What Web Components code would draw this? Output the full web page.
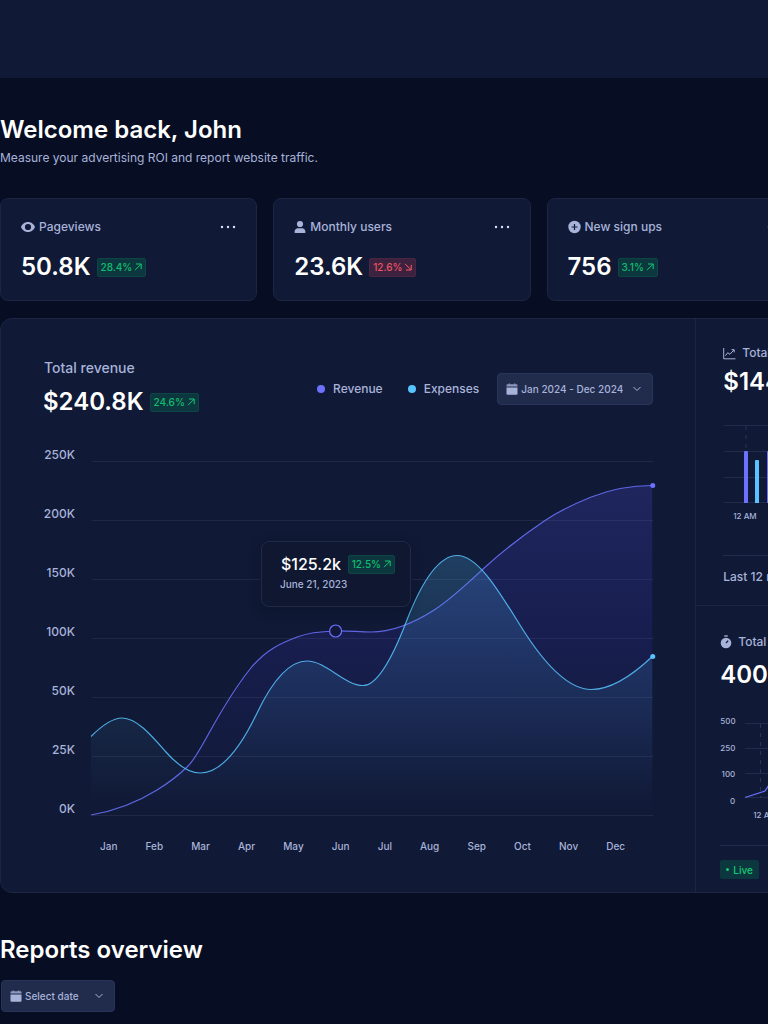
<!DOCTYPE html>
<html lang="en">
<head>
<meta charset="utf-8">
<meta name="viewport" content="width=device-width, initial-scale=1">
<title>Dashboard</title>
<style>
  html { background: #070d22; }
  body {
    margin: 0;
    overflow-x: hidden;
    font-family: Inter, "Noto Sans", sans-serif;
    font-size: 12px;
    line-height: 16px;
    color: #a8b3da;
    --panel: #101935;
    --line: #1c2541;
    --purple: #6c72ff;
    --cyan: #57c3ff;
  }
</style>
</head>
<body>
<dash-page></dash-page>

<script>
const icons = {
  eye: '<svg width="14" height="14" viewBox="0 0 14 14"><path fill="currentColor" fill-rule="evenodd" d="M7 2C3.600 2 1 4.300 0 7c1 2.700 3.600 5 7 5s6-2.300 7-5C13 4.300 10.400 2 7 2Zm0 1.900a3.100 3.100 0 1 1 0 6.200a3.100 3.100 0 0 1 0-6.200Z"/></svg>',
  user: '<svg width="12" height="14" viewBox="0 0 12 14"><circle cx="6" cy="4" r="3.100" fill="currentColor"/><path fill="currentColor" d="M.5 12.200C.5 9.500 2.200 8.200 4 8.200h4c1.800 0 3.500 1.300 3.500 4c0 .5-.3.800-.8.800H1.300c-.5 0-.8-.3-.8-.800Z"/></svg>',
  plus: '<svg width="13" height="14" viewBox="0 0 13 14"><circle cx="6.500" cy="7" r="6.200" fill="currentColor"/><path d="M6.500 4v6M3.500 7h6" stroke="#101935" stroke-width="1.200"/></svg>',
  chart: '<svg width="13" height="13" viewBox="0 0 13 13" fill="none" stroke="currentColor"><path d="M.7 1v10.800H12.500M2.500 8.700l2.200-3 2.200 1.600 4-4.300M8.500 2.700h2.700v2.700"/></svg>',
  watch: '<svg width="12" height="14" viewBox="0 0 12 14"><circle cx="6" cy="8" r="5.300" fill="currentColor"/><path d="M4.200 1h3.600" stroke="currentColor" stroke-width="1.300"/><path d="M6 8l2.200-2.300" stroke="#101935" stroke-width="1.200"/></svg>',
  calendar: '<svg width="12" height="12" viewBox="0 0 12 12"><path fill="currentColor" d="M.5 4.500h11v6.300a1 1 0 0 1-1 1h-9a1 1 0 0 1-1-1Z"/><path fill="currentColor" d="M1.500 1.200h1.300V.2h.9v1h4.600v-1h.9v1h1.300a1 1 0 0 1 1 1v1.400H.5V2.200a1 1 0 0 1 1-1Z" opacity=".8"/></svg>',
  dots: '<svg width="16" height="4" viewBox="0 0 16 4" fill="#d9e1fa"><circle cx="2" cy="2" r="1.200"/><circle cx="8" cy="2" r="1.200"/><circle cx="14" cy="2" r="1.200"/></svg>',
  chevron: '<svg width="10" height="6" viewBox="0 0 10 6" fill="none" stroke="currentColor"><path d="M1.500 1L5 4.500L8.500 1"/></svg>',
  up: '<svg width="8" height="8" viewBox="0 0 8 8" fill="none" stroke="currentColor"><path d="M1 7.200L7 1.200M2 1h5.200v5.200"/></svg>',
  down: '<svg width="8" height="8" viewBox="0 0 8 8" fill="none" stroke="currentColor"><path d="M1 .8L7 6.800M2 7h5.200V1.800"/></svg>'
};

function define(name, markup, setup) {
  const template = document.createElement('template');
  template.innerHTML = markup;
  customElements.define(name, class extends HTMLElement {
    connectedCallback() {
      if (this.shadowRoot) return;
      this.attachShadow({ mode: 'open' }).append(template.content.cloneNode(true));
      if (setup) setup(this, this.shadowRoot);
    }
  });
}

/* Smooth line through [x, y, slope] knots ordered by x. */
function curve(knots) {
  let d = `M${knots[0][0]} ${knots[0][1]}`;
  for (let i = 1; i < knots.length; i++) {
    const [x0, y0, m0] = knots[i - 1], [x1, y1, m1] = knots[i], h = (x1 - x0) / 3;
    d += 'C' + [x0 + h, y0 + m0 * h, x1 - h, y1 - m1 * h, x1, y1].join(' ');
  }
  return d;
}

define('dash-icon', '<style>:host{display:block;flex:none}svg{display:block}</style>', (host, root) => {
  root.append(document.createRange().createContextualFragment(icons[host.getAttribute('name')]));
});

define('trend-badge', `
  <style>
    :host { display: flex; align-items: center; gap: 2px; height: 19px; padding: 0 3px; box-sizing: border-box;
      border-radius: 2px; font-size: 10px; font-weight: 500; line-height: 12px;
      color: #14ca74; background: #0c373f; border: 1px solid #0d4444; }
    :host([down]) { color: #ff5a65; background: #3d2240; border-color: #4a2643; }
    span { opacity: .9; }
  </style>
  <span><slot></slot></span>`, (host, root) => {
  const icon = document.createElement('dash-icon');
  icon.setAttribute('name', host.hasAttribute('down') ? 'down' : 'up');
  root.append(icon);
});

define('stat-card', `
  <style>
    :host { display: block; box-sizing: border-box; height: 103px; padding: 18px 20px;
      border: 1px solid var(--line); border-radius: 8px; background: var(--panel); }
    header, .value { display: flex; align-items: center; }
    header { height: 20px; gap: 4px; }
    h2 { margin: 0; flex: 1; font-size: 12px; font-weight: 500; line-height: 20px; }
    button { border: 0; padding: 8px 0; background: none; display: flex; }
    .value { gap: 6px; margin-top: 14px; }
    strong { font-size: 24px; line-height: 32px; font-weight: 600; color: #fff; }
  </style>
  <header><slot name="icon"></slot><h2><slot name="label"></slot></h2>
    <button type="button" aria-label="More options"><dash-icon name="dots"></dash-icon></button></header>
  <div class="value"><strong><slot></slot></strong><slot name="trend"></slot></div>`);

define('date-select', `
  <style>
    :host { display: grid; grid-template-columns: auto; align-items: center; width: max-content; }
    select, dash-icon { grid-area: 1 / 1; }
    dash-icon { pointer-events: none; }
    .cal { margin-left: 9px; justify-self: start; }
    .chev { margin-right: 11px; justify-self: end; }
    select { appearance: none; box-sizing: border-box; min-width: 114px; height: 32px; padding: 0 29px 0 23px; margin: 0;
      border: 1px solid #29345a; border-radius: 4px; background: #212c4d; color: inherit;
      font-family: inherit; font-size: 10px; font-weight: 500; line-height: 14px; }
  </style>
  <select></select><dash-icon class="cal" name="calendar"></dash-icon><dash-icon class="chev" name="chevron"></dash-icon>`,
(host, root) => {
  const select = root.querySelector('select');
  select.setAttribute('aria-label', 'Date range');
  select.add(new Option(host.getAttribute('value')));
});

define('revenue-chart', `
  <style>
    :host { display: grid; grid-template-columns: 32px 1fr; column-gap: 16px; }
    .y { display: flex; flex-direction: column; justify-content: space-between; height: 370px; margin-top: -14px;
      text-align: right; font-size: 12px; line-height: 16px; font-weight: 500; }
    .plot { position: relative; height: 355px; }
    .plot > svg { display: block; width: 100%; height: 100%; overflow: visible; }
    .months { grid-column: 2; display: flex; justify-content: space-between; padding: 22px 28px 0 9px;
      font-size: 10px; line-height: 14px; font-weight: 500; }
    .tip { position: absolute; left: 170px; top: 80px; box-sizing: border-box; width: 150px; height: 66px; padding: 12px 15px 0 18px;
      border: 1px solid #202945; border-radius: 8px; background: #0f1731; box-shadow: 0 4px 12px #080f2566; }
    .tip div { display: flex; align-items: center; justify-content: space-between; }
    .tip strong { padding-left: 1px; font-size: 16px; line-height: 20px; font-weight: 500; color: #fff; }
    .tip time { display: block; margin-top: 2px; font-size: 10px; line-height: 16px; font-weight: 500; }
  </style>
  <div class="y"><span>250K</span><span>200K</span><span>150K</span><span>100K</span><span>50K</span><span>25K</span><span>0K</span></div>
  <div class="plot">
    <svg viewBox="0 0 562 355" preserveAspectRatio="none">
      <defs>
        <linearGradient id="rev" gradientUnits="userSpaceOnUse" x1="0" y1="24" x2="0" y2="355">
          <stop offset="0" stop-color="#575bff" stop-opacity=".2"/><stop offset=".5" stop-color="#4a40ff" stop-opacity=".12"/><stop offset="1" stop-color="#4a40ff" stop-opacity="0"/>
        </linearGradient>
        <linearGradient id="exp" gradientUnits="userSpaceOnUse" x1="0" y1="94" x2="0" y2="350">
          <stop offset="0" stop-color="#57c3ff" stop-opacity=".22"/><stop offset="1" stop-color="#57c3ff" stop-opacity="0"/>
        </linearGradient>
      </defs>
      <path d="M1 .5H562M1 59.500H562M1 118.500H562M1 177.500H562M1 236.500H562M1 295.500H562M1 354.500H562" stroke="#1f2845"/>
      <g class="series"></g>
      <circle cx="244.500" cy="170" r="6" fill="#11183a" stroke="#6c72ff" stroke-width="1.200"/>
      <circle cx="561.500" cy="24.500" r="2.500" fill="#6c72ff"/>
      <circle cx="561.500" cy="195.500" r="2.500" fill="#57c3ff"/>
    </svg>
    <div class="tip"><div><strong>$125.2k</strong><trend-badge>12.5%</trend-badge></div><time datetime="2023-06-21">June 21, 2023</time></div>
  </div>
  <div class="months"></div>`, (host, root) => {
  const revenue = [[0,354,-.17],[66,329,-.62],[97,305,-1],[118,272,-1.8],[159,208,-1.25],[206,176,-.38],[244,170,-.03],[280,171,0],[343,149,-.64],[393,107,-.92],[453,60,-.68],[500,36,-.4],[561,24.500,0]];
  const expenses = [[0,275.500,-1],[31,257,0],[74,290,1.150],[109,312,0],[166,252,-2.100],[216,200,0],[272,224.500,0],[315,161,-2.600],[366,94.500,0],[430,166,1.600],[500,228.500,0],[561,195.500,-.95]];
  const draw = (knots, id, color) => `<path d="${curve(knots)}L561 354.500H0Z" fill="url(#${id})"/><path d="${curve(knots)}" fill="none" stroke="${color}" stroke-opacity=".85" stroke-width="1.200"/>`;
  root.querySelector('.series').innerHTML = draw(revenue, 'rev', '#6c72ff') + draw(expenses, 'exp', '#57c3ff');
  for (const month of 'Jan Feb Mar Apr May Jun Jul Aug Sep Oct Nov Dec'.split(' ')) {
    const span = document.createElement('span');
    span.textContent = month;
    root.querySelector('.months').append(span);
  }
});

define('revenue-panel', `
  <style>
    :host { display: block; padding: 37px 42px 0 42px; }
    header { display: flex; align-items: flex-start; justify-content: space-between; height: 66px; margin-bottom: 39px; }
    h2 { margin: 0; padding-left: 1px; font-size: 14px; line-height: 24px; font-weight: 500; }
    .value, .tools, .tools span { display: flex; align-items: center; }
    .value { gap: 6px; margin-top: 6px; }
    strong { font-size: 24px; line-height: 32px; font-weight: 600; color: #fff; }
    .tools { gap: 18px; align-self: center; }
    .tools span { gap: 8px; font-size: 12px; font-weight: 500; }
    .tools span + span { margin-left: 7px; }
    i { width: 8px; height: 8px; border-radius: 50%; background: var(--purple); }
    span + span i { background: var(--cyan); }
  </style>
  <header>
    <div><h2>Total revenue</h2><div class="value"><strong>$240.8K</strong><trend-badge>24.6%</trend-badge></div></div>
    <div class="tools"><span><i></i>Revenue</span><span><i></i>Expenses</span><date-select value="Jan 2024 - Dec 2024"></date-select></div>
  </header>
  <revenue-chart></revenue-chart>`);

const sideStyle = `
  header { display: flex; align-items: center; gap: 6px; height: 20px; }
  h2 { margin: 0; font-size: 12px; line-height: 20px; font-weight: 500; }
  strong { display: block; font-size: 24px; line-height: 32px; font-weight: 600; color: #fff; }
  svg { display: block; }
  footer { display: flex; align-items: center; box-sizing: border-box; border-top: 1px solid #222b49; white-space: nowrap; }
  .x { display: flex; gap: 52px; font-size: 8px; line-height: 12px; font-weight: 500; }`;

define('profit-panel', `
  <style>${sideStyle}
    :host { display: block; box-sizing: border-box; height: 287px; padding: 24px 24px 0 27px; border-bottom: 1px solid var(--line); }
    strong { margin: 3px 0 27px; }
    .x { padding: 6px 0 0 10px; margin-bottom: 33px; }
    footer { height: 42px; font-weight: 500; }
  </style>
  <header><dash-icon name="chart"></dash-icon><h2>Total profit</h2></header>
  <strong>$144.6K</strong>
  <svg width="326" height="79" viewBox="0 0 326 79">
    <path d="M1 .5H326M1 26.500H326M1 52.500H326M1 77.500H326" stroke="#222b49"/>
    <path d="M23 1V26" stroke="#2b3557" stroke-dasharray="4 5"/>
    <path d="M21 78V27q0-1 1-1h2q1 0 1 1V78ZM44 78V27q0-1 1-1h2q1 0 1 1V78Z" fill="#6c72ff"/>
    <path d="M32 78V36q0-1 1-1h2q1 0 1 1V78Z" fill="#57c3ff"/>
  </svg>
  <div class="x"><span>12 AM</span></div>
  <footer>Last 12 months</footer>`);

define('sessions-panel', `
  <style>${sideStyle}
    :host { display: block; padding: 26px 24px 0 24px; }
    strong { margin: 7px 0 24px; }
    .graph { display: grid; grid-template-columns: 15px 1fr; column-gap: 9px; }
    .y { display: flex; flex-direction: column; justify-content: space-between; height: 92px; text-align: right;
      font-size: 8px; line-height: 12px; font-weight: 500; }
    .graph svg { margin-top: 8px; }
    .x { grid-column: 2; padding: 2px 0 0 9px; margin-bottom: 24px; }
    footer { height: 46px; padding-top: 2px; gap: 6px; font-weight: 500; }
    b { display: flex; align-items: center; gap: 4px; height: 19px; padding: 0 6px; border-radius: 2px;
      background: #0c373f; color: #14ca74; font-size: 10px; font-weight: 500; }
    b::before { content: ""; width: 3px; height: 3px; border-radius: 50%; background: #14ca74; }
  </style>
  <header><dash-icon name="watch"></dash-icon><h2>Total sessions</h2></header>
  <strong>400</strong>
  <div class="graph">
    <div class="y"><span>500</span><span>250</span><span>100</span><span>0</span></div>
    <svg width="302" height="77" viewBox="0 0 302 77">
      <path d="M1 .5H302M1 25.500H302M1 50.500H302M1 74.500H302" stroke="#222b49"/>
      <path d="M16.500 1V75" stroke="#2b3557" stroke-dasharray="4 5"/>
      <path d="M1 74.500L21 68L25 62" fill="none" stroke="#6c72ff" stroke-width="1.300"/>
    </svg>
    <div class="x"><span>12 AM</span></div>
  </div>
  <footer><b>Live</b></footer>`);

define('dash-page', `
  <style>
    :host { display: block; }
    .bar { height: 78px; background: var(--panel); }
    main { min-width: 1077px; padding-bottom: 12px; }
    h1, .reports { margin: 0; font-size: 24px; line-height: 32px; font-weight: 600; color: #fff; }
    h1 { padding-top: 36px; }
    p { margin: 3px 0 0; line-height: 18px; }
    .cards { display: grid; grid-template-columns: repeat(4, 1fr); gap: 16px; margin-top: 31px; }
    .panel { display: grid; grid-template-columns: 31fr 17fr; margin-top: 17px; box-sizing: border-box; min-height: 575px;
      border: 1px solid var(--line); border-radius: 12px; background: var(--panel); }
    .side { border-left: 1px solid var(--line); }
    .reports { margin: 41px 0 14px; }
    date-select { margin-left: 1px; }
  </style>
  <div class="bar"></div>
  <main>
    <h1>Welcome back, John</h1>
    <p>Measure your advertising ROI and report website traffic.</p>
    <section class="cards">
      <stat-card><dash-icon slot="icon" name="eye"></dash-icon><span slot="label">Pageviews</span>50.8K<trend-badge slot="trend">28.4%</trend-badge></stat-card>
      <stat-card><dash-icon slot="icon" name="user"></dash-icon><span slot="label">Monthly users</span>23.6K<trend-badge slot="trend" down>12.6%</trend-badge></stat-card>
      <stat-card><dash-icon slot="icon" name="plus"></dash-icon><span slot="label">New sign ups</span>756<trend-badge slot="trend">3.1%</trend-badge></stat-card>
    </section>
    <section class="panel">
      <revenue-panel></revenue-panel>
      <div class="side"><profit-panel></profit-panel><sessions-panel></sessions-panel></div>
    </section>
    <h2 class="reports">Reports overview</h2>
    <date-select value="Select date"></date-select>
  </main>`);
</script>
</body>
</html>
